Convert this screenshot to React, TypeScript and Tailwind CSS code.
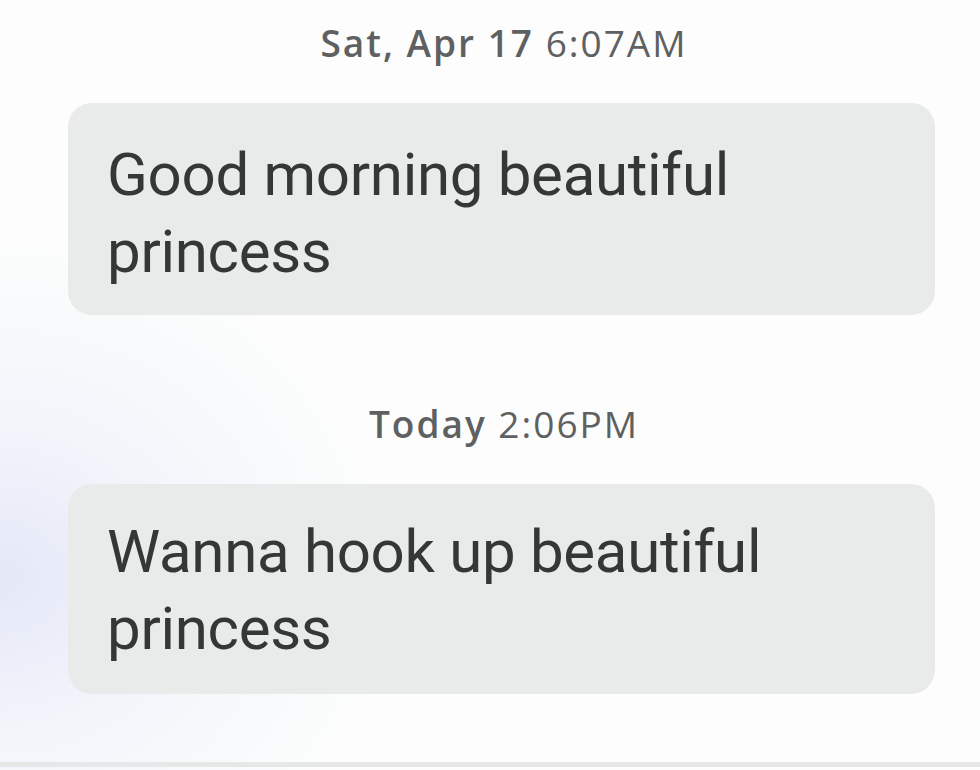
const messages = [
  { day: 'Sat, Apr 17', time: '6:07AM', text: 'Good morning beautiful princess', gap: 'mt-[23px]', pad: 'pt-[33px] pb-[25px]' },
  { day: 'Today', time: '2:06PM', text: 'Wanna hook up beautiful princess', gap: 'mt-[89px]', pad: 'pt-[29px] pb-[27px]' },
]

export default function App() {
  return (
    <div className="w-[980px] h-[770px] overflow-hidden bg-[radial-gradient(ellipse_40%_45%_at_0%_75%,#e4e8f7_0%,#f3f5fb_45%,#fcfdfc_100%)] flex flex-col">
      <div className="flex-1 flex flex-col">
        {messages.map((m, i) => (
          <div key={i} className={m.gap}>
            <div
              className="pl-[28px] text-center text-[37px] leading-[40px] text-[#5e6061] tracking-[2px]"
              style={{ fontFamily: '"Open Sans", Roboto, sans-serif' }}
            >
              <span className="font-semibold">{m.day}</span> <span>{m.time}</span>
            </div>
            <div
              className={`ml-[68px] w-[867px] mt-[40px] rounded-[24px] bg-[#e9ebea] pl-[39px] pr-[150px] ${m.pad}`}
              style={{ fontFamily: 'Roboto, "Open Sans", sans-serif' }}
            >
              <p className="text-[60px] leading-[77px] text-[#353637] tracking-[-0.3px]">{m.text}</p>
            </div>
          </div>
        ))}
      </div>
      <div className="h-[5px] bg-[#e6e8e8] mb-[3px]" />
    </div>
  )
}
